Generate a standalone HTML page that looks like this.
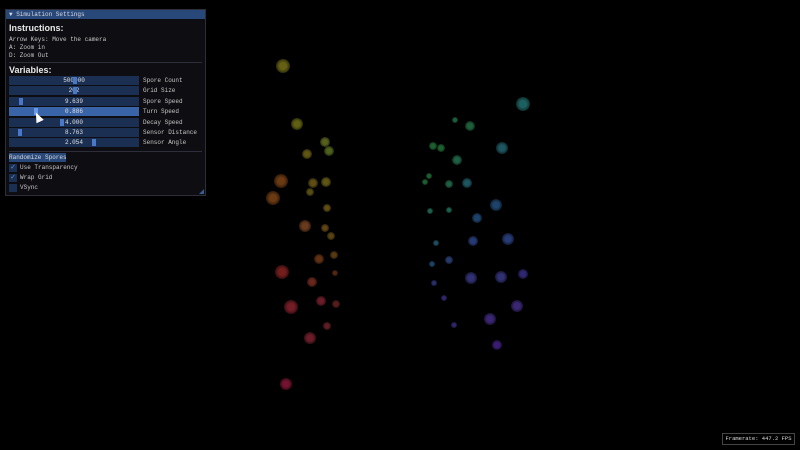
<!DOCTYPE html>
<html><head><style>
body{margin:0;width:800px;height:450px;background:#000;overflow:hidden;position:relative;font-family:"Liberation Mono",monospace;}
.b{position:absolute;border-radius:50%;}
#p{position:absolute;left:5px;top:9px;width:201px;height:187px;background:#0d0d12;border:1px solid #2e2e3a;box-sizing:border-box;color:#d8d8d8;font-size:6px;white-space:nowrap}
#t{height:9px;background:#29487a;color:#d8d8e0;line-height:9px;padding-left:3px;font-size:6px;}
h3{margin:0;font-family:"Liberation Sans",sans-serif;font-size:9px;font-weight:bold;position:absolute;left:3px;color:#e8e8e8}
.l{position:absolute;left:3px;color:#c8c8c8;line-height:8px}
.s{position:absolute;left:3px;width:130px;height:9px;background:#1b2f52;text-align:center;line-height:9px;color:#e0e0e0}
.s i{position:absolute;top:1px;width:4px;height:7px;background:#4a78c8}
.n{position:absolute;left:137px;color:#c8c8c8;line-height:9px}
.hr{position:absolute;left:3px;right:3px;height:1px;background:#2e2e3a}
.c{position:absolute;left:3px;width:8px;height:8px;background:#1b2f52;color:#5a8ee0;font-size:8px;line-height:8px;text-align:center}
</style></head><body>
<div id="blobs"></div>
<div id="p">
<div id="t">▼ Simulation Settings</div>
<h3 style="top:13px">Instructions:</h3>
<div class="l" style="top:26px">Arrow Keys: Move the camera</div>
<div class="l" style="top:34px">A: Zoom in</div>
<div class="l" style="top:42px">D: Zoom Out</div>
<div class="hr" style="top:52px"></div>
<h3 style="top:55px">Variables:</h3>
<div class="s" style="top:66px"><i style="left:64px"></i>500000</div><div class="n" style="top:66px">Spore Count</div>
<div class="s" style="top:76px"><i style="left:64px"></i>202</div><div class="n" style="top:76px">Grid Size</div>
<div class="s" style="top:87px"><i style="left:10px"></i>9.639</div><div class="n" style="top:87px">Spore Speed</div>
<div class="s" style="top:97px;background:#3a64a8"><i style="left:25px;background:#6a98e8"></i>0.886</div><div class="n" style="top:97px">Turn Speed</div>
<div class="s" style="top:108px"><i style="left:51px"></i>4.000</div><div class="n" style="top:108px">Decay Speed</div>
<div class="s" style="top:118px"><i style="left:9px"></i>8.763</div><div class="n" style="top:118px">Sensor Distance</div>
<div class="s" style="top:128px"><i style="left:83px"></i>2.054</div><div class="n" style="top:128px">Sensor Angle</div>
<div class="hr" style="top:141px"></div>
<div style="position:absolute;left:3px;top:143px;width:57px;height:9px;background:#29487a;line-height:9px;text-align:center">Randomize Spores</div>
<div class="c" style="top:154px">✓</div><div class="l" style="left:14px;top:154px">Use Transparency</div>
<div class="c" style="top:164px">✓</div><div class="l" style="left:14px;top:164px">Wrap Grid</div>
<div class="c" style="top:174px"></div><div class="l" style="left:14px;top:174px">VSync</div>
<div style="position:absolute;right:1px;bottom:1px;width:0;height:0;border-left:5px solid transparent;border-bottom:5px solid #3a5a90"></div>
</div>
<div style="position:absolute;left:34px;top:112px;width:0;height:0;border-left:4px solid transparent;border-right:4px solid transparent;border-bottom:10px solid #fff;transform:rotate(-25deg)"></div>
<div style="position:absolute;left:722px;top:433px;width:73px;height:12px;border:1px solid #444;box-sizing:border-box;color:#ddd;font-size:5.5px;line-height:10px;text-align:center;white-space:nowrap">Framerate: 447.2 FPS</div>
<script>
var d=[[283,66,'#a8a020',7],[297,124,'#a0a020',6],[325,142,'#90a030',5],[329,151,'#80a030',5],[307,154,'#a09020',5],[326,182,'#a09020',5],[313,183,'#a08020',5],[310,192,'#908020',4],[281,181,'#b06020',7],[273,198,'#b06020',7],[327,208,'#a08020',4],[305,226,'#b06030',6],[325,228,'#a07020',4],[331,236,'#907020',4],[282,272,'#c03030',7],[319,259,'#a05020',5],[334,255,'#906020',4],[312,282,'#b04030',5],[335,273,'#904020',3],[321,301,'#b03040',5],[336,304,'#903030',4],[291,307,'#c03040',7],[327,326,'#a03040',4],[310,338,'#b03040',6],[286,384,'#c02050',6],
[523,104,'#30a0a0',7],[470,126,'#30a060',5],[455,120,'#30a060',3],[433,146,'#30a050',4],[441,148,'#30a050',4],[502,148,'#3090a0',6],[457,160,'#30a070',5],[429,176,'#30a050',3],[425,182,'#30a050',3],[449,184,'#30a070',4],[467,183,'#3090a0',5],[496,205,'#3070b0',6],[477,218,'#3070b0',5],[449,210,'#30a080',3],[430,211,'#30a080',3],[473,241,'#4060c0',5],[508,239,'#4060c0',6],[436,243,'#3080a0',3],[449,260,'#4060b0',4],[432,264,'#3070b0',3],[501,277,'#5050c0',6],[471,278,'#5050c0',6],[523,274,'#5040c0',5],[434,283,'#4050b0',3],[444,298,'#5040b0',3],[517,306,'#6040c0',6],[490,319,'#6040c0',6],[454,325,'#5040b0',3],[497,345,'#6030c0',5]];
var h='';d.forEach(function(b){h+='<div class="b" style="left:'+(b[0]-b[3])+'px;top:'+(b[1]-b[3])+'px;width:'+2*b[3]+'px;height:'+2*b[3]+'px;background:radial-gradient(circle,'+b[2]+' 35%,transparent 100%);opacity:.6"></div>';});
document.getElementById('blobs').innerHTML=h;
</script>
</body></html>
